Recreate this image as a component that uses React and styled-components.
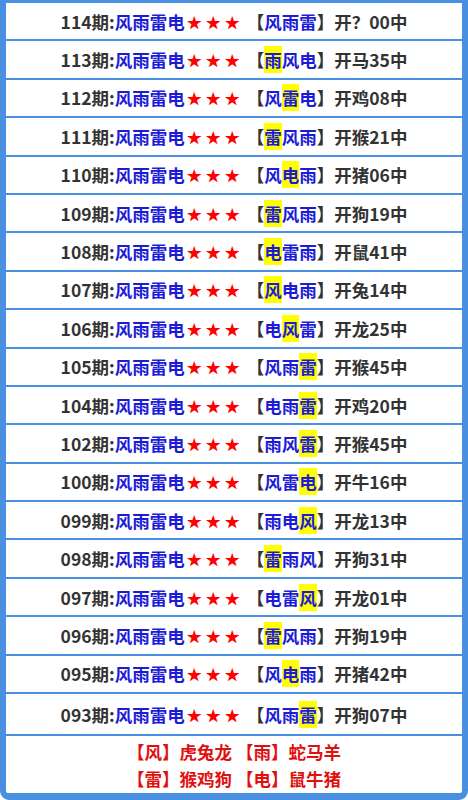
import styled, { createGlobalStyle } from "styled-components";

const GlobalStyle = createGlobalStyle`
  html, body {
    margin: 0;
    padding: 0;
    background: #ffffff;
  }
  body {
    font-family: "Noto Sans CJK SC", "Noto Sans", sans-serif;
  }
`;

const Board = styled.div`
  width: 468px;
  height: 800px;
  box-sizing: border-box;
  background: #ffffff;
  border: solid #4a90e2;
  border-width: 3px 6px 7px 6px;
  border-radius: 0 0 9px 9px;
  display: flex;
  flex-direction: column;
  overflow: hidden;
`;

const Row = styled.div`
  height: ${(p) => (p.$tall ? "40px" : "36.4px")};
  border-bottom: 2px solid #4a90e2;
  display: flex;
  align-items: center;
  justify-content: center;
  font-size: 17.5px;
  font-weight: 600;
  color: #333333;
  white-space: nowrap;
  flex-shrink: 0;
`;

const Blue = styled.span`
  color: #1c1cd8;
`;

const Stars = styled.span`
  color: #ff0000;
  font-size: 15px;
  letter-spacing: 4px;
  margin: 0 3px 0 2px;
`;

const Mark = styled.span`
  background: ${(p) => (p.$on ? "#ffff00" : "transparent")};
  padding: 1px 0;
`;

const Footer = styled.div`
  flex: 1;
  display: flex;
  flex-direction: column;
  align-items: center;
  justify-content: center;
  font-size: 17.5px;
  font-weight: 600;
  color: #e01010;
  line-height: 27px;
`;

const rows = [
  ["114", "风雨雷", -1, "开？00中"],
  ["113", "雨风电", 0, "开马35中"],
  ["112", "风雷电", 1, "开鸡08中"],
  ["111", "雷风雨", 0, "开猴21中"],
  ["110", "风电雨", 1, "开猪06中"],
  ["109", "雷风雨", 0, "开狗19中"],
  ["108", "电雷雨", 0, "开鼠41中"],
  ["107", "风电雨", 0, "开兔14中"],
  ["106", "电风雷", 1, "开龙25中"],
  ["105", "风雨雷", 2, "开猴45中"],
  ["104", "电雨雷", 2, "开鸡20中"],
  ["102", "雨风雷", 2, "开猴45中"],
  ["100", "风雷电", 2, "开牛16中"],
  ["099", "雨电风", 2, "开龙13中"],
  ["098", "雷雨风", 0, "开狗31中"],
  ["097", "电雷风", 2, "开龙01中"],
  ["096", "雷风雨", 0, "开狗19中"],
  ["095", "风电雨", 1, "开猪42中"],
  ["093", "风雨雷", 2, "开狗07中"],
];

const App = () => {
  return (
    <>
      <GlobalStyle />
      <Board>
        {rows.map(([no, pick, hl, result], i) => (
          <Row key={no} $tall={i === rows.length - 1}>
            {no}期:<Blue>风雨雷电</Blue>
            <Stars>★★★</Stars>
            【
            <Blue>
              {pick.split("").map((ch, j) => (
                <Mark key={j} $on={j === hl}>
                  {ch}
                </Mark>
              ))}
            </Blue>
            】{result}
          </Row>
        ))}
        <Footer>
          <div>【风】虎兔龙 【雨】蛇马羊</div>
          <div>【雷】猴鸡狗 【电】鼠牛猪</div>
        </Footer>
      </Board>
    </>
  );
};

export default App;
